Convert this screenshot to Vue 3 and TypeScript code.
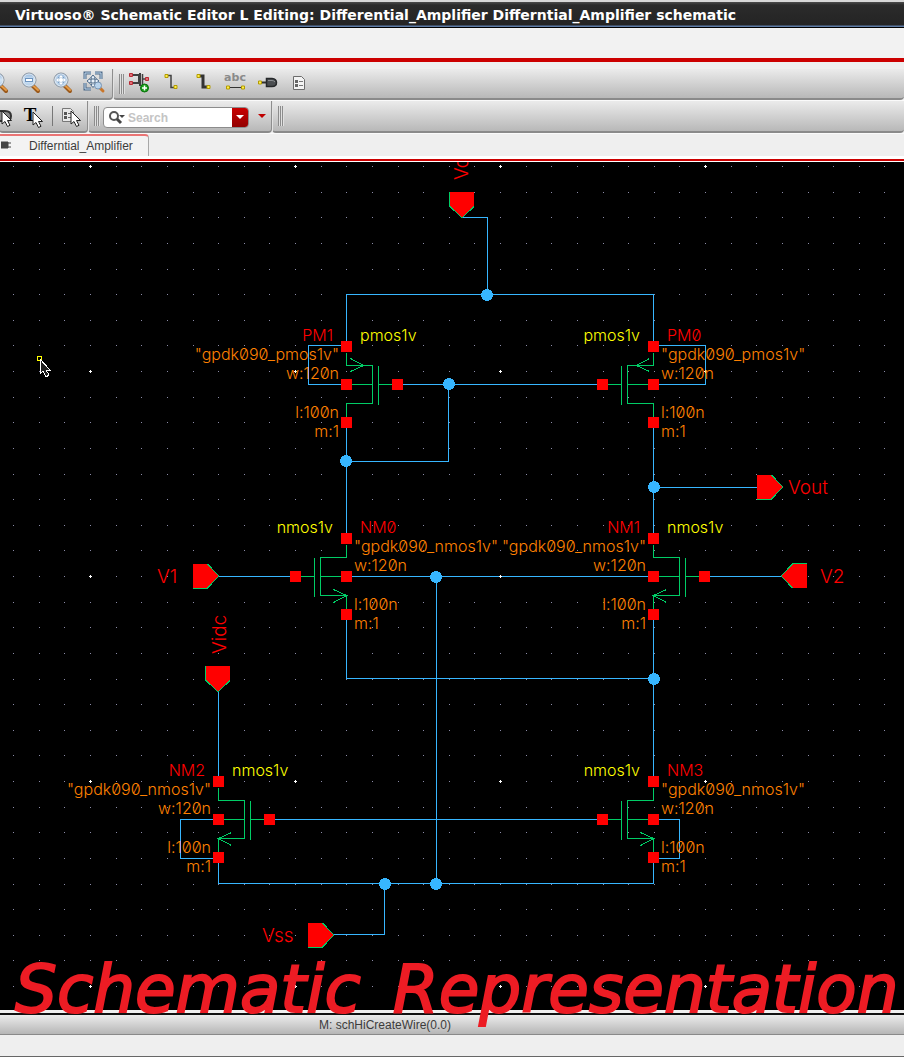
<script setup lang="ts">
import { computed, ref } from 'vue'

interface Transistor {
  name: string
  kind: 'pmos1v' | 'nmos1v'
  x: number
  y: number
  dir: 1 | -1
}

interface Port {
  label: string
  x: number
  y: number
  angle: number
  lx: number
  ly: number
  vertical?: boolean
}

const query = ref('')

const transistors: Transistor[] = [
  { name: 'PM1', kind: 'pmos1v', x: 346, y: 384, dir: 1 },
  { name: 'PM0', kind: 'pmos1v', x: 653, y: 384, dir: -1 },
  { name: 'NM0', kind: 'nmos1v', x: 346, y: 576, dir: -1 },
  { name: 'NM1', kind: 'nmos1v', x: 653, y: 576, dir: 1 },
  { name: 'NM2', kind: 'nmos1v', x: 218, y: 819, dir: 1 },
  { name: 'NM3', kind: 'nmos1v', x: 653, y: 819, dir: -1 },
]

// x and y are the tip of the port, angle is the way it points
const ports: Port[] = [
  { label: 'Vdd', x: 462, y: 217, angle: 90, lx: 468, ly: 180, vertical: true },
  { label: 'Vout', x: 782, y: 487, angle: 0, lx: 788, ly: 494 },
  { label: 'V1', x: 218, y: 576, angle: 0, lx: 157, ly: 583 },
  { label: 'V2', x: 782, y: 576, angle: 180, lx: 820, ly: 583 },
  { label: 'Vidc', x: 218, y: 691, angle: 90, lx: 226, ly: 654, vertical: true },
  { label: 'Vss', x: 333, y: 935, angle: 0, lx: 262, ly: 942 },
]

const wires = [
  'M461 217H487V294',
  'M346 346V294H653V346',
  'M346 345H308V384H346',
  'M653 345H705V384H653',
  'M397 384H602',
  'M448 384V461H346',
  'M346 422V538',
  'M653 422V538',
  'M653 487H757',
  'M217 576H295',
  'M346 576H653',
  'M705 576H782',
  'M346 615V678H653',
  'M653 615V781',
  'M436 576V883',
  'M218 690V781',
  'M218 858V883H653V858',
  'M218 819H180V858H218',
  'M653 819H679V858H653',
  'M269 819H602',
  'M384 883V934H332',
]

const junctions = [
  [487, 295], [449, 384], [346, 461], [654, 487],
  [436, 577], [654, 679], [385, 884], [436, 884],
]

const PITCH = 25.625

const dots = computed(() => {
  const out: { x: number; y: number; major: boolean }[] = []
  for (let c = -3; c < 72; c++) {
    for (let r = 0; r < 33; r++) {
      out.push({
        x: Math.round(90 + c * PITCH),
        y: Math.round(166 + r * PITCH),
        major: c % 8 === 0 && r % 8 === 0,
      })
    }
  }
  return out
})

function body(t: Transistor): string {
  const ch = t.x + (t.dir > 0 ? 26 : -26)
  const gate = t.x + t.dir * 32
  const pin = t.x + t.dir * 51
  return (
    `M${t.x} ${t.y - 32}V${t.y - 19}H${ch}V${t.y + 19}H${t.x}V${t.y + 33}` +
    `M${t.x} ${t.y}H${ch}M${gate} ${t.y - 19}V${t.y + 20}M${gate} ${t.y}H${pin}`
  )
}

function arrow(t: Transistor): string {
  if (t.kind === 'pmos1v') {
    const tip = t.x + t.dir * 17
    const tail = t.x + t.dir * 4
    return `M${tail} ${t.y - 26}L${tip} ${t.y - 19}L${tail} ${t.y - 13}`
  }
  const tail = t.x + t.dir * 13
  return `M${tail} ${t.y + 13}L${t.x} ${t.y + 19}L${tail} ${t.y + 26}`
}

function pins(t: Transistor): number[][] {
  return [
    [t.x, t.y - 38],
    [t.x, t.y],
    [t.x, t.y + 38],
    [t.x + t.dir * 51, t.y],
  ]
}

function params(t: Transistor): { text: string; y: number }[] {
  return [
    { text: `"gpdk090_${t.kind}"`, y: t.y - 24 },
    { text: 'w:120n', y: t.y - 5 },
    { text: 'l:100n', y: t.y + 34 },
    { text: 'm:1', y: t.y + 53 },
  ]
}
</script>

<template>
  <div class="window">
    <header class="title"><h1>Virtuoso® Schematic Editor L Editing: Differential_Amplifier Differntial_Amplifier schematic</h1></header>
    <div class="menu"></div>

    <svg class="defs" aria-hidden="true">
      <defs>
        <linearGradient id="lens" x1="0" y1="0" x2="0" y2="1">
          <stop offset="0" stop-color="#8fb4dc" />
          <stop offset="0.5" stop-color="#d4e5f5" />
          <stop offset="1" stop-color="#a9c8e6" />
        </linearGradient>
        <g id="glass">
          <path d="M16 17L21 22" stroke="#9b5a1c" stroke-width="4" stroke-linecap="round" />
          <path d="M16 16.500L21 21" stroke="#e59a45" stroke-width="2" stroke-linecap="round" />
          <circle cx="12" cy="11" r="7" fill="url(#lens)" stroke="#8b949e" stroke-width="1" />
          <circle cx="12" cy="11" r="6" fill="none" stroke="#dfe8f1" stroke-width="1" />
        </g>
        <path id="pointer" d="M0 0V13L3 10.500L5.500 15.500L8 14.300L5.500 9.500H9.500Z" fill="#fff" stroke="#222" stroke-width="1" />
      </defs>
    </svg>

    <div class="bar upper">
      <div class="group scrolled">
        <button class="tool" aria-label="Zoom in">
          <svg width="26" height="26"><use href="#glass" /><path d="M9 11h6M12 8v6" stroke="#4372a5" stroke-width="2" /></svg>
        </button>
        <button class="tool" aria-label="Zoom out">
          <svg width="26" height="26"><use href="#glass" /><rect x="8.500" y="9.500" width="7" height="3" fill="#fff" stroke="#6d94bf" /></svg>
        </button>
        <button class="tool" aria-label="Zoom to fit">
          <svg width="26" height="26"><use href="#glass" /><path d="M12 5.500l3 3.500h-6zM12 16.500l3-3.500h-6zM6.500 11l3.500-3v6zM17.500 11l-3.500-3v6z" fill="#fff" stroke="#6d94bf" stroke-width="0.500" /><circle cx="12" cy="11" r="2" fill="#fff" /></svg>
        </button>
        <button class="tool" aria-label="Zoom to area">
          <svg width="26" height="26" fill="none">
            <path d="M4 10V4H10M14 4H20V10M4 14V20H10" stroke="#4d6a89" stroke-width="3" />
            <path d="M4 10V4H10M14 4H20V10M4 14V20H10" stroke="#c3d9ee" stroke-width="1" />
            <path d="M12 6L14.500 9H13V11H15V9.500L18 12L15 14.500V13H13V15.500H14.500L12 18.500L9.500 15.500H11V13H9V14.500L6 12L9 9.500V11H11V9H9.500Z" fill="#e9f1f9" stroke="#4d6a89" stroke-width="1" />
            <path d="M19 19L22 22" stroke="#c9762a" stroke-width="3" stroke-linecap="round" />
            <circle cx="17" cy="16.500" r="3.500" fill="#b8d3ec" stroke="#7794b3" />
          </svg>
        </button>
      </div>
      <div class="group rest">
        <span class="grip"></span>
        <button class="tool" aria-label="Create instance">
          <svg width="26" height="26" fill="none">
            <path d="M5 6H13V14H5M14 4V17" stroke="#404040" stroke-width="2" />
            <path d="M16.500 5V16M16 10H20" stroke="#404040" stroke-width="1.500" />
            <path d="M3.500 4.500h3v3h-3zM3.500 12.500h3v3h-3zM19.500 8.500h3v3h-3z" fill="#e07078" stroke="#b82b35" />
            <circle cx="18.500" cy="19" r="4" fill="#18a018" stroke="#08700b" />
            <path d="M16 19h5M18.500 16.500v5" stroke="#fff" stroke-width="1.500" />
          </svg>
        </button>
        <button class="tool" aria-label="Create wire">
          <svg width="26" height="26" fill="none">
            <path d="M8 6.500H13V18.500H18" stroke="#404040" stroke-width="1.500" />
            <path d="M7 5.500h3v3H7zM16 16.500h3v3h-3z" fill="#ffef4c" stroke="#b39b00" />
          </svg>
        </button>
        <button class="tool" aria-label="Create wide wire">
          <svg width="26" height="26" fill="none">
            <path d="M9 7H13V18H17" stroke="#333" stroke-width="3" />
            <path d="M7 5.500h3v3H7zM17 16.500h3v3h-3z" fill="#ffef4c" stroke="#b39b00" />
          </svg>
        </button>
        <button class="tool" aria-label="Create wire name">
          <svg width="26" height="26" fill="none">
            <text x="13" y="12" class="abc">abc</text>
            <path d="M5 18.500H22" stroke="#333" stroke-width="1" />
            <path d="M4.500 17h3v3h-3zM19.500 17h3v3h-3z" fill="#ffef4c" stroke="#b39b00" />
          </svg>
        </button>
        <button class="tool" aria-label="Create pin">
          <svg width="26" height="26" fill="none">
            <path d="M6 13.500H13" stroke="#333" stroke-width="2" />
            <path d="M12.500 9.500H18Q22.500 10 22.500 13.500Q22.500 17.500 18 17.500H12.500Z" fill="#4b4e51" stroke="#26282a" stroke-width="1.500" />
            <path d="M14 11.500H18Q20 11.500 21 13" stroke="#8a8d90" />
            <path d="M4.500 12h3v3h-3z" fill="#ffef4c" stroke="#b39b00" />
          </svg>
        </button>
        <button class="tool" aria-label="Edit properties">
          <svg width="26" height="26" fill="none">
            <path d="M7.500 7.500H15.500L18.500 10.500V20.500H7.500Z" fill="#f3f3f3" stroke="#6c6c6c" />
            <path d="M9 11h3v3H9zM9 15h3v3H9z" fill="#666" />
            <path d="M13 12.500h4M13 16.500h4" stroke="#777" />
          </svg>
        </button>
      </div>
    </div>

    <div class="bar lower">
      <div class="group select">
        <button class="tool narrow" aria-label="Select pins">
          <svg width="26" height="26" fill="none">
            <path d="M4 8H13Q19 8 19 13Q19 18 13 18H4Z" fill="#8b8b8b" stroke="#333" stroke-width="2" />
            <use href="#pointer" x="10" y="8" />
          </svg>
        </button>
        <button class="tool narrow" aria-label="Select text">
          <svg width="26" height="26" fill="none">
            <text x="8" y="18" class="tee">T</text>
            <use href="#pointer" x="11" y="9" />
          </svg>
        </button>
        <span class="rule"></span>
        <button class="tool" aria-label="Select form">
          <svg width="26" height="26" fill="none">
            <path d="M4.500 5.500H12.500L15.500 8.500V18.500H4.500Z" fill="#e8e8e8" stroke="#777" />
            <path d="M6 9h3v3H6zM6 13h3v3H6z" fill="#555" />
            <path d="M10 10.500h4M10 14.500h4" stroke="#666" />
            <use href="#pointer" x="13" y="8" />
          </svg>
        </button>
      </div>
      <div class="group">
        <span class="grip"></span>
        <div class="search">
          <svg width="20" height="18" fill="none" aria-hidden="true">
            <circle cx="6" cy="7" r="4" stroke="#555" stroke-width="2" />
            <path d="M9 10L13 14" stroke="#444" stroke-width="3" />
            <path d="M11 6h6l-3 3z" fill="#444" />
          </svg>
          <input v-model="query" type="text" placeholder="Search" aria-label="Search" />
          <button class="drop" aria-label="Search options"><svg width="8" height="5"><path d="M0 0H8L4 4Z" fill="#fff" /></svg></button>
        </div>
        <button class="more" aria-label="More"><svg width="8" height="5"><path d="M0 0H8L4 4Z" fill="#c00000" /></svg></button>
      </div>
      <div class="group rest"><span class="grip"></span></div>
    </div>

    <nav class="tabs">
      <button class="tab">
        <svg width="12" height="10" aria-hidden="true"><path d="M0 1H7V7H0ZM7 2H10M7 6H10" fill="#444" stroke="#444" /></svg>
        <span>Differntial_Amplifier</span>
      </button>
    </nav>

    <main class="canvas">
      <svg class="sheet" role="img" aria-label="Differential amplifier schematic">
        <g transform="translate(0 -162)">
          <g class="dots">
            <rect v-for="(d, i) in dots" :key="i" :x="d.x" :y="d.y" width="1" height="1" />
          </g>
          <g class="wires" transform="translate(0.5 0.5)"><path v-for="w in wires" :key="w" :d="w" /></g>
          <g class="devices" transform="translate(0.5 0.5)">
            <g v-for="t in transistors" :key="t.name"><path :d="body(t)" /><path :d="arrow(t)" /></g>
          </g>
          <g class="major">
            <template v-for="(d, i) in dots" :key="i">
              <path v-if="d.major" :d="`M${d.x - 1} ${d.y}h3v1h-3zM${d.x} ${d.y - 1}h1v3h-1z`" />
            </template>
          </g>
          <g v-for="t in transistors" :key="t.name">
            <rect v-for="(p, i) in pins(t)" :key="i" class="pin" :x="p[0] - 5" :y="p[1] - 5" width="11" height="11" />
            <text class="red" :x="t.dir > 0 ? t.x - 13 : t.x + 14" :y="t.y - 43" :text-anchor="t.dir > 0 ? 'end' : 'start'">{{ t.name }}</text>
            <text class="yellow" :x="t.dir > 0 ? t.x + 14 : t.x - 13" :y="t.y - 43" :text-anchor="t.dir > 0 ? 'start' : 'end'">{{ t.kind }}</text>
            <text v-for="p in params(t)" :key="p.text" class="orange" :x="t.dir > 0 ? t.x - 7 : t.x + 8" :y="p.y" :text-anchor="t.dir > 0 ? 'end' : 'start'">{{ p.text }}</text>
          </g>
          <circle v-for="(j, i) in junctions" :key="i" class="junction" :cx="j[0]" :cy="j[1]" r="6" />
          <g v-for="p in ports" :key="p.label">
            <g :transform="`translate(${p.x} ${p.y}) rotate(${p.angle})`">
              <path class="edge" d="M-25 12H-11L0 0L-11 -12" />
              <path class="port" d="M-25 -12H-11L0 0L-11 12H-25Z" />
            </g>
            <text class="red label" :transform="`translate(${p.lx} ${p.ly}) rotate(${p.vertical ? -90 : 0})`">{{ p.label }}</text>
          </g>
          <rect x="37.500" y="356.500" width="4" height="4" fill="none" stroke="#ffff00" />
          <path d="M40 359V374L43 371L46 377L49 375L46 370H50Z" fill="#222" stroke="#fff" />
        </g>
      </svg>
      <p class="caption"><span>Schematic</span> <span>Representation</span></p>
    </main>

    <footer>
      <div class="status">M: schHiCreateWire(0.0)</div>
      <div class="prompt"></div>
    </footer>
  </div>
</template>

<style>
body {
  margin: 0;
}
</style>

<style scoped>
* {
  box-sizing: border-box;
}
.window {
  display: flex;
  flex-direction: column;
  min-height: 100vh;
  overflow: hidden;
  background: #efefef;
  font-family: "Liberation Sans", Arial, sans-serif;
  font-size: 12px;
  color: #3c3c3c;
}
.defs {
  position: absolute;
  width: 0;
  height: 0;
}
button {
  border: 0;
  padding: 0;
  margin: 0;
  background: none;
  font: inherit;
  color: inherit;
}
.title {
  height: 28px;
  padding: 0 15px;
  border-top: 2px solid #d8d8d8;
  border-bottom: 1px solid #000;
  background: linear-gradient(#4c4c4c, #2b2b2b 3px, #242424 23px, #5d7ba6 24px, #5d7ba6);
}
.title h1 {
  margin: 0;
  font: bold 14px/26px "DejaVu Sans", sans-serif;
  color: #fff;
  white-space: nowrap;
}
.menu {
  height: 34px;
  background: #f2f2f2;
  border-bottom: 4px solid #cc0000;
}
.bar {
  display: flex;
  border-bottom: 1px solid #fafafa;
}
.upper {
  height: 32px;
  margin-top: 7px;
}
.lower {
  height: 33px;
}
.group {
  display: flex;
  flex: none;
  align-items: center;
  border-right: 1px solid #8e8e8e;
  border-bottom: 2px solid #8a8a8a;
  border-left: 1px solid #e2e2e2;
  border-radius: 0 0 4px 4px;
  background: linear-gradient(#ebebeb, #b8b8b8);
}
.group.rest {
  flex: 1;
  border-right: 0;
}
.upper .tool {
  align-self: flex-start;
}
.upper .grip {
  margin-right: -2px;
}
.scrolled {
  margin-left: -19px;
  width: 132px;
}
.select {
  width: 89px;
  margin-left: -1px;
}
.tool {
  display: flex;
  flex: none;
  align-items: center;
  justify-content: center;
  width: 32px;
  height: 26px;
}
.tool.narrow {
  width: 30px;
  margin-left: -10px;
}
.tool.narrow + .narrow {
  margin-left: 0;
}
.grip {
  flex: none;
  width: 6px;
  height: 20px;
  margin: 0 3px 0 5px;
  background: repeating-linear-gradient(90deg, #8c8c8c 0 1px, #e0e0e0 1px 2px);
}
.rule {
  width: 1px;
  height: 20px;
  margin: 0 2px;
  background: #777;
}
.abc {
  font: bold 11px "DejaVu Sans", sans-serif;
  fill: #8a8a8a;
  text-anchor: middle;
}
.tee {
  font: bold 19px "Liberation Serif", serif;
  fill: #000;
  text-anchor: middle;
}
.search {
  display: flex;
  align-items: center;
  width: 146px;
  height: 21px;
  margin-top: 3px;
  padding-left: 4px;
  border: 1px solid #8c8c8c;
  border-radius: 4px;
  background: #fff;
  overflow: hidden;
}
.search input {
  flex: 1;
  min-width: 0;
  height: 19px;
  padding: 0;
  border: 0;
  outline: 0;
  background: none;
  font: bold 12px "Liberation Sans", Arial, sans-serif;
}
.search input::placeholder {
  color: #c4c4c4;
  opacity: 1;
}
.drop {
  display: flex;
  align-items: center;
  justify-content: center;
  width: 16px;
  height: 21px;
  background: linear-gradient(#cc0000, #8f0000);
}
.more {
  display: flex;
  justify-content: center;
  width: 22px;
  padding-left: 3px;
}
.tabs {
  display: flex;
  height: 27px;
  padding-bottom: 3px;
  border-bottom: 2px solid #cc0000;
  background: linear-gradient(#efefef 22px, #fff 22px);
}
.tab {
  display: flex;
  align-items: center;
  gap: 16px;
  height: 22px;
  padding: 0 15px 0 1px;
  border-top: 2px solid #ea7474;
  border-right: 1px solid #a8a8a8;
  border-radius: 0 4px 0 0;
  background: #f3f3f3;
}
.canvas {
  position: relative;
  flex: 1;
  border-top: 1px solid #fff;
  background: #000;
}
.sheet {
  display: block;
  width: 100%;
  height: 848px;
  shape-rendering: crispEdges;
  font: 300 16px Inter, "Liberation Sans", sans-serif;
  font-feature-settings: "zero" 1;
}
.dots {
  fill: #8c8ca8;
}
.major {
  fill: #fff;
}
.wires {
  fill: none;
  stroke: #37b6ff;
}
.devices {
  fill: none;
  stroke: #00cc66;
}
.pin,
.port {
  fill: #ff0000;
}
.edge {
  fill: none;
  stroke: #00cc66;
  stroke-width: 2;
}
.junction {
  fill: #37b6ff;
}
.red {
  fill: #ff0000;
}
.yellow {
  fill: #ffff00;
}
.orange {
  fill: #ff8000;
}
.label {
  font-size: 19px;
}
.caption {
  position: absolute;
  left: 15px;
  bottom: -20px;
  display: flex;
  gap: 32px;
  margin: 0;
  font: italic 66px/80px "DejaVu Sans", sans-serif;
  -webkit-text-stroke: 2px #ed1c24;
  color: #ed1c24;
  white-space: nowrap;
}
footer {
  border-top: 3px solid #efefef;
}
.status {
  height: 22px;
  padding-left: 319px;
  border-top: 2px solid #111;
  border-bottom: 1px solid #8a8a8a;
  background: linear-gradient(#ececec, #b6b6b6);
  line-height: 20px;
}
.prompt {
  height: 22px;
  border-bottom: 1px solid #666;
}
</style>
